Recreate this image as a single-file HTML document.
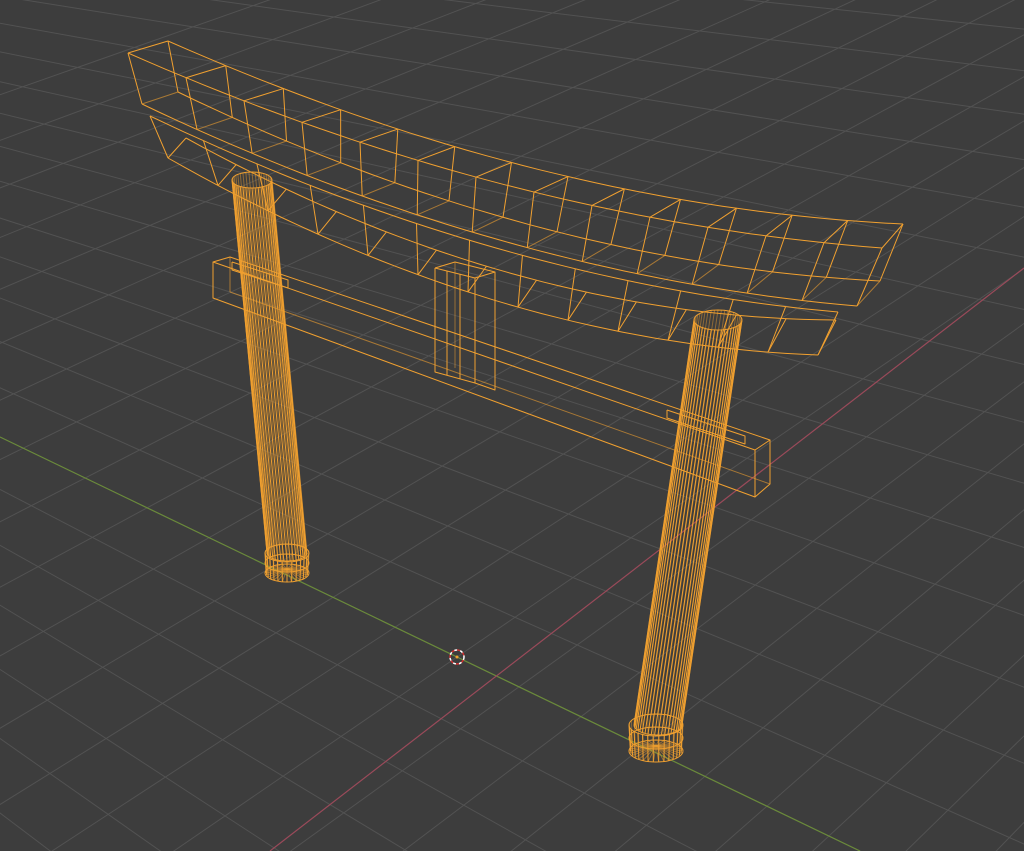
<!DOCTYPE html>
<html><head><meta charset="utf-8"><style>
html,body{margin:0;padding:0;background:#3d3d3d;overflow:hidden;width:1024px;height:851px}
svg{display:block;position:absolute;left:0;top:0}
</style></head><body>
<svg id="s" width="1024" height="851" viewBox="0 0 1024 851" xmlns="http://www.w3.org/2000/svg">
<rect width="1024" height="851" fill="#3d3d3d"/>
<g id="grid" stroke="#525252" stroke-width="1"></g>
<line x1="0" y1="437" x2="860" y2="851" stroke="#6a8a3a" stroke-width="1.2"/>
<line x1="270" y1="851" x2="1024" y2="268" stroke="#9a4a5a" stroke-width="1.2"/>
<g id="w" fill="none" stroke="#f0a030" stroke-width="1" stroke-linejoin="round"></g>
<circle cx="457" cy="657" r="7" fill="none" stroke="#fff" stroke-width="1.5" stroke-dasharray="3 3"/>
<circle cx="457" cy="657" r="7" fill="none" stroke="#d03030" stroke-width="1.5" stroke-dasharray="3 3" stroke-dashoffset="3"/>
<circle cx="457" cy="657" r="1.5" fill="#f0a030"/>
</svg>
<script>
var NS="http://www.w3.org/2000/svg";
function L(g,a,b,c,d,o){var l=document.createElementNS(NS,"line");l.setAttribute("x1",a);l.setAttribute("y1",b);l.setAttribute("x2",c);l.setAttribute("y2",d);if(o)l.setAttribute("stroke-opacity",o);g.appendChild(l);}
var G=document.getElementById("grid");
var V1=[2629,-831];
for(var k=-14;k<=14;k++){var px=457+k*62,py=657+0.481*k*62;
 var dx=px-V1[0],dy=py-V1[1];var t=3;L(G,V1[0],V1[1],V1[0]+dx*t,V1[1]+dy*t);}
var V2=[-1371,-223];
for(var k=-14;k<=18;k++){var px=457+k*58,py=657-0.685*k*58;
 var dx=px-V2[0],dy=py-V2[1];var t=3;L(G,V2[0],V2[1],V2[0]+dx*t,V2[1]+dy*t);}
var W=document.getElementById("w");
function q(c,t){var u=1-t;return [u*u*c[0]+2*u*t*c[2]+t*t*c[4],u*u*c[1]+2*u*t*c[3]+t*t*c[5]];}
function P(pts){var p=document.createElementNS(NS,"polyline");p.setAttribute("points",pts.map(function(a){return a[0].toFixed(1)+","+a[1].toFixed(1)}).join(" "));W.appendChild(p);}
var BT=[168,41,544,207,903,224],FT=[128,53,505,219,882,248],BB=[178,92,531,263,880,281],FB=[142,104,500,275,857,306];
var ST=[150,116,498,282,838,312],SB=[168,158,493,343,818,355],SBB=[186,138,512,318,836,320];
var curves=[BT,FT,BB,FB,ST,SB,SBB];
curves.forEach(function(c){var a=[];for(var i=0;i<=40;i++)a.push(q(c,i/40));P(a);});
var N=13;
for(var i=0;i<=N;i++){var t=i/N;
 var a=q(FT,t),b=q(FB,t),c=q(BT,t),d=q(BB,t),e=q(ST,t),f=q(SB,t),g=q(SBB,t);
 L(W,a[0],a[1],b[0],b[1]);L(W,c[0],c[1],d[0],d[1]);L(W,a[0],a[1],c[0],c[1]);L(W,b[0],b[1],d[0],d[1],0.6);
 L(W,e[0],e[1],f[0],f[1]);L(W,f[0],f[1],g[0],g[1]);
}
P([[213,262],[755,450],[755,497],[213,298],[213,262],[230,257],[770,440],[755,450]]);
P([[770,440],[770,484],[755,497]]);
L(W,230,257,230,292,0.6);L(W,230,292,770,484,0.6);
P([[232,262],[288,280],[288,288],[232,270],[232,262]]);
P([[667,410],[745,436],[745,444],[667,418],[667,410]]);
P([[435,268],[475,278],[475,383],[435,372],[435,268]]);
P([[435,268],[455,262],[495,272],[475,278]]);P([[495,272],[495,390],[475,383]]);
L(W,447,271,447,375);L(W,460,274,460,379);L(W,455,262,455,368,0.5);
function pillar(tx,ty,rx,ry,bx,by,brx,bry,n){
 var top=[];
 for(var i=0;i<=48;i++){var a=i/48*Math.PI*2;top.push([tx+rx*Math.cos(a),ty+ry*Math.sin(a)]);}
 P(top);
 for(var i=0;i<n;i++){var a=i/n*Math.PI*2;var c=Math.cos(a),s=Math.sin(a);
  L(W,tx+rx*c,ty+ry*s,bx+brx*c,by+bry*s,s>0?1:0.45);}
 var b=[];for(var i=0;i<=48;i++){var a=i/48*Math.PI;b.push([bx+brx*Math.cos(a),by+bry*Math.sin(a)]);}P(b);
}
function base(cx,cy,rx,ry,h,n){
 for(var j=0;j<3;j++){var y=cy+j*h/2;var a=[];for(var i=0;i<=48;i++){var t=i/48*Math.PI*2;a.push([cx+rx*Math.cos(t),y+ry*Math.sin(t)]);}P(a);}
 for(var i=0;i<n;i++){var t=i/n*Math.PI*2;var c=Math.cos(t),s=Math.sin(t);L(W,cx+rx*c,cy+ry*s,cx+rx*c*0.95,cy+h+ry*s,s>0?1:0.4);
  L(W,cx,cy+h*0.8,cx+rx*c*0.95,cy+h+ry*s,0.5);}
}
pillar(252,180,20,8,287,553,20,8,40);
base(287,553,22,9,20,28);
pillar(718,320,24,10,658,725,24,10,44);
base(656,725,27,11,26,30);
</script>
</body></html>
